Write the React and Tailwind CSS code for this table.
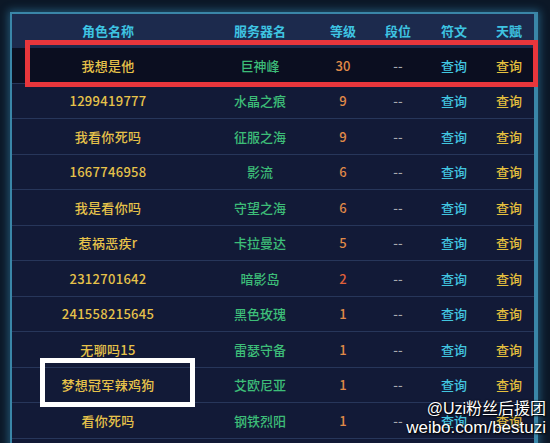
const rows = [
  ['我想是他', '巨神峰', '30'],
  ['1299419777', '水晶之痕', '9'],
  ['我看你死吗', '征服之海', '9'],
  ['1667746958', '影流', '6'],
  ['我是看你吗', '守望之海', '6'],
  ['惹祸恶疾r', '卡拉曼达', '5'],
  ['2312701642', '暗影岛', '2'],
  ['241558215645', '黑色玫瑰', '1'],
  ['无聊吗15', '雷瑟守备', '1'],
  ['梦想冠军辣鸡狗', '艾欧尼亚', '1'],
  ['看你死吗', '钢铁烈阳', '1'],
];

const cols = 'grid grid-cols-[192px_112px_54px_56px_56px_54px] items-center text-center';

export default function App() {
  return (
    <div
      className="relative w-[550px] h-[443px] overflow-hidden bg-[#0c1827] pt-[12px] pl-[10px] pr-[12px]"
      style={{ fontFamily: '"Noto Sans CJK SC", "Noto Sans", sans-serif' }}
    >
      <div className="h-[460px] border-l-[2px] border-t-[2px] border-r-[4px] border-[#3a86a8] shadow-[0_0_8px_2px_rgba(58,150,200,0.45)] bg-[#111936]">
        <div className={`${cols} h-[34px] bg-[#1c2a4d] text-[13px] font-bold text-[#3ec4e2]`}>
          <div>角色名称</div>
          <div>服务器名</div>
          <div>等级</div>
          <div>段位</div>
          <div>符文</div>
          <div>天赋</div>
        </div>
        {rows.map(([name, server, lvl], i) => (
          <div
            key={i}
            className={`${cols} h-[35.5px] border-b border-[#27365a] text-[13px] font-medium ${i === 0 ? 'bg-[#0b0e20]' : 'bg-[#121a37]'}`}
          >
            <div className="text-[#e6c24a] tracking-[0.3px]">{name}</div>
            <div className="text-[#3dbd78]">{server}</div>
            <div className={lvl === '2' ? 'text-[#e0603a]' : 'text-[#e08a48]'}>{lvl}</div>
            <div className="text-[#a8aab0]">--</div>
            <div className="text-[#42c6e0]">查询</div>
            <div className="text-[#e6c03e]">查询</div>
          </div>
        ))}
      </div>

      <div className="absolute left-[25px] top-[40px] w-[513px] h-[47px] border-[5px] border-[#e8363c]" />
      <div className="absolute left-[40px] top-[358px] w-[155px] h-[49px] border-[5px] border-white" />

      <div
        className="absolute right-[4px] top-[399px] text-right text-white leading-[19px] [text-shadow:0_0_2px_#000,1px_1px_2px_#000]"
        style={{ fontFamily: '"Liberation Sans", "Noto Sans CJK SC", sans-serif' }}
      >
        <div className="text-[16px]">@Uzi粉丝后援团</div>
        <div className="text-[17px]">weibo.com/bestuzi</div>
      </div>
    </div>
  );
}
